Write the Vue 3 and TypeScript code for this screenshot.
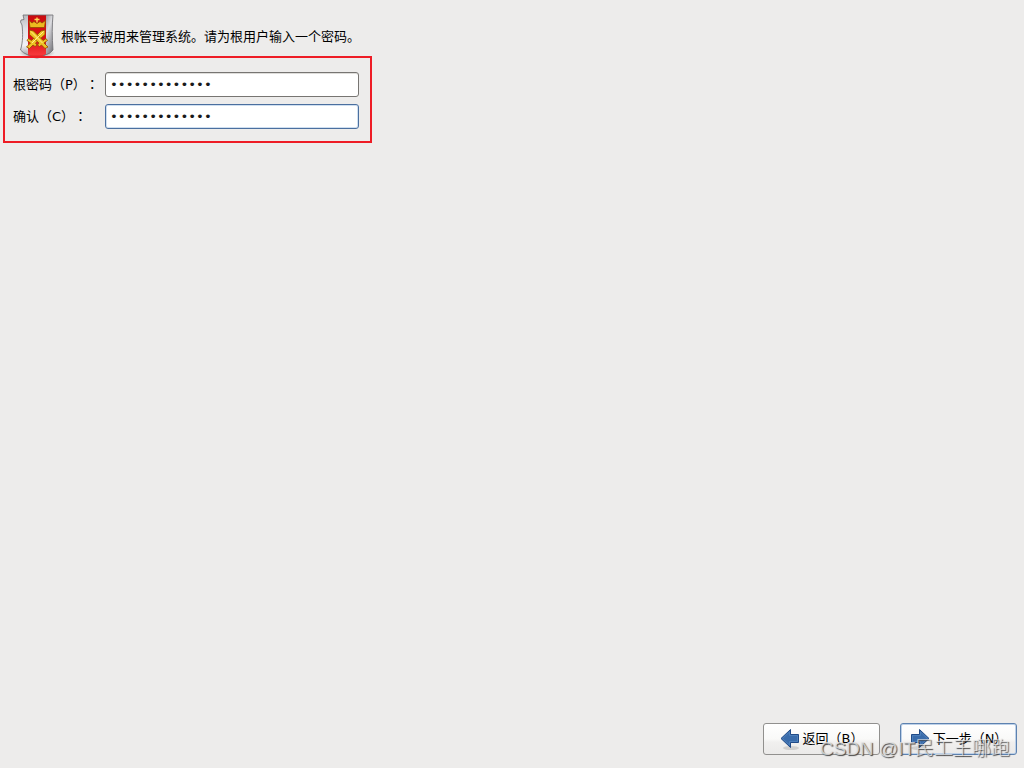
<script setup lang="ts">
import { ref } from 'vue'

const password = ref<string>('rootpassword1')
const confirmation = ref<string>('rootpassword1')
</script>

<template>
  <form class="installer" @submit.prevent>
    <header class="intro">
      <svg class="shield" viewBox="0 0 36 46" aria-hidden="true">
        <defs>
          <linearGradient id="silver" x1="0" y1="0" x2="0" y2="1">
            <stop offset="0" stop-color="#b4b4b8" />
            <stop offset=".35" stop-color="#e2e2e6" />
            <stop offset=".7" stop-color="#f2f2f5" />
            <stop offset="1" stop-color="#8c8c90" />
          </linearGradient>
          <linearGradient id="silver-right" x1="0" y1="0" x2=".6" y2="1">
            <stop offset="0" stop-color="#909094" />
            <stop offset=".4" stop-color="#dcdce0" />
            <stop offset="1" stop-color="#6f6f74" />
          </linearGradient>
          <linearGradient id="red" x1="0" y1="0" x2="0" y2="1">
            <stop offset="0" stop-color="#c80b0e" />
            <stop offset=".6" stop-color="#dd1216" />
            <stop offset=".9" stop-color="#f6383a" />
            <stop offset="1" stop-color="#b81518" />
          </linearGradient>
          <radialGradient id="shade">
            <stop offset="0" stop-color="#444" stop-opacity=".8" />
            <stop offset="1" stop-color="#555" stop-opacity="0" />
          </radialGradient>
          <clipPath id="shield-shape">
            <path d="M4 2H34C33 12 33 24 34 37Q31 41 26 42Q22 45 18 45Q13 45 9 42Q4 40 1.500 37C4 29 4 20 3 12L1.500 9L2 7L5 6.500Z" />
          </clipPath>
        </defs>
        <ellipse cx="18" cy="40" rx="18" ry="5" fill="url(#shade)" />
        <g clip-path="url(#shield-shape)">
          <rect width="36" height="46" fill="url(#silver)" />
          <rect x="26" width="10" height="46" fill="url(#silver-right)" />
          <rect x="9" width="18" height="46" fill="url(#red)" />
        </g>
        <path d="M4 2H34C33 12 33 24 34 37Q31 41 26 42Q22 45 18 45Q13 45 9 42Q4 40 1.500 37C4 29 4 20 3 12L1.500 9L2 7L5 6.500Z" fill="none" stroke="#6c6c70" stroke-width=".8" />
        <path d="M10 7.500L13 10L15 8.500L18 10.500L21 8.500L23 10L26.500 7.500L25.500 14.500H11Z" fill="#edb91f" stroke="#8f4a00" stroke-width=".8" />
        <path d="M18 4.500V9.500M15.500 6.500H20.500" stroke="#ffd95a" stroke-width="1.400" />
        <g fill="#efc425" stroke="#8f4a00" stroke-width=".8" stroke-linejoin="round">
          <path d="M26 17V21.500L16.500 30L18 32L16 33.500L14 32L10.500 35.500L7.500 34L11.500 30L8 27.500L9.500 25.500L12.500 27.500L22 18Z" />
          <path d="M10.500 17V21.500L20 30L18.500 32L20.500 33.500L22.500 32L26 35.500L29 34L25 30L28.500 27.500L27 25.500L24 27.500L14.500 18Z" />
        </g>
        <path d="M12 18.500L23.500 30M24.500 18.500L13 30" fill="none" stroke="#fff08a" stroke-width="1" />
      </svg>
      <p class="message">根帐号被用来管理系统。请为根用户输入一个密码。</p>
    </header>

    <section class="credentials">
      <label for="password">根密码（P）<span class="colon">：</span></label>
      <input id="password" v-model="password" type="password" />
      <label for="confirmation">确认（C）<span class="colon">：</span></label>
      <input id="confirmation" v-model="confirmation" class="active" type="password" />
    </section>

    <footer class="actions">
      <button type="button">
        <svg class="arrow" viewBox="0 0 20 22" aria-hidden="true">
          <ellipse class="arrow-shadow" cx="11" cy="20" rx="8" ry="2" />
          <path class="arrow-body" d="M1 10.500L10.500 1.500V6.500H18.500V14.500H10.500V19.500Z" />
          <path class="arrow-shine" d="M2.500 10.500L9.500 4V7.500H17.500V13.500H9.500V17Z" />
        </svg>
        <span>返回（B）</span>
      </button>
      <button type="submit" class="default">
        <svg class="arrow" viewBox="0 0 20 22" aria-hidden="true">
          <ellipse class="arrow-shadow" cx="9" cy="20" rx="8" ry="2" />
          <path class="arrow-body" d="M19 10.500L9.500 1.500V6.500H1.500V14.500H9.500V19.500Z" />
          <path class="arrow-shine" d="M17.500 10.500L10.500 4V7.500H2.500V13.500H10.500V17Z" />
        </svg>
        <span>下一步（N）</span>
      </button>
    </footer>

    <div class="watermark">CSDN @IT民工王哪跑</div>
  </form>
</template>

<style>
body {
  background: #edeceb;
}
</style>

<style scoped>
.installer {
  position: relative;
  box-sizing: border-box;
  min-height: 100vh;
  display: flex;
  flex-direction: column;
  align-items: flex-start;
  padding: 13px 7px 13px 3px;
  background: #edeceb;
  color: #000;
  font: 13px/20px "DejaVu Sans", "Noto Sans CJK SC", sans-serif;
  text-spacing-trim: space-all;
}

.intro {
  display: flex;
  gap: 6px;
  height: 43px;
  padding-left: 16px;
}

.shield {
  width: 36px;
  height: 46px;
}

.message {
  margin: 14px 0 0;
}

.credentials {
  box-sizing: border-box;
  display: grid;
  grid-template-columns: 92px 254px;
  gap: 7px 0;
  align-items: center;
  padding: 14px 11px 12px 8px;
  border: 2px solid #ee1c25;
}

.credentials label {
  white-space: nowrap;
}

.colon {
  font-family: "Noto Sans CJK TC", sans-serif;
  line-height: 1;
}

.credentials input {
  box-sizing: border-box;
  width: 100%;
  height: 25px;
  padding: 0 4px;
  border: 1px solid #777572;
  border-radius: 3px;
  outline: 0;
  background: #fff;
  box-shadow: inset 0 1px 0 #deddda;
  color: #1a1a1a;
  font: 13px/20px "DejaVu Sans Mono", monospace;
}

.credentials input.active {
  border-color: #4b6f9f;
  box-shadow: inset 0 0 0 1px #cfdff0;
}

.actions {
  display: flex;
  gap: 20px;
  align-self: flex-end;
  margin-top: auto;
}

.actions button {
  box-sizing: border-box;
  display: flex;
  align-items: center;
  justify-content: center;
  gap: 3px;
  width: 117px;
  height: 32px;
  padding: 0;
  border: 1px solid #91908e;
  border-radius: 3px;
  background: linear-gradient(#fff, #f9f9f8 50%, #f1f0ef 60%, #ebeae9);
  color: #000;
  font: inherit;
  white-space: nowrap;
}

.actions .default {
  border-color: #5d82b0;
  box-shadow: inset 0 0 0 1px #bed1e8;
}

.arrow {
  flex: none;
  width: 20px;
  height: 22px;
}

.arrow-body {
  fill: #3a6cab;
  stroke: #204a87;
}

.arrow-shine {
  fill: none;
  stroke: #4d7fbb;
}

.arrow-shadow {
  fill: #000;
  opacity: .12;
}

.watermark {
  position: absolute;
  right: 14px;
  bottom: 6px;
  color: rgba(228, 228, 228, .8);
  font: 300 19px/26px "Liberation Sans", "Noto Sans CJK SC", sans-serif;
  text-shadow: 1px 1px 1px #444;
  white-space: nowrap;
  pointer-events: none;
}
</style>
